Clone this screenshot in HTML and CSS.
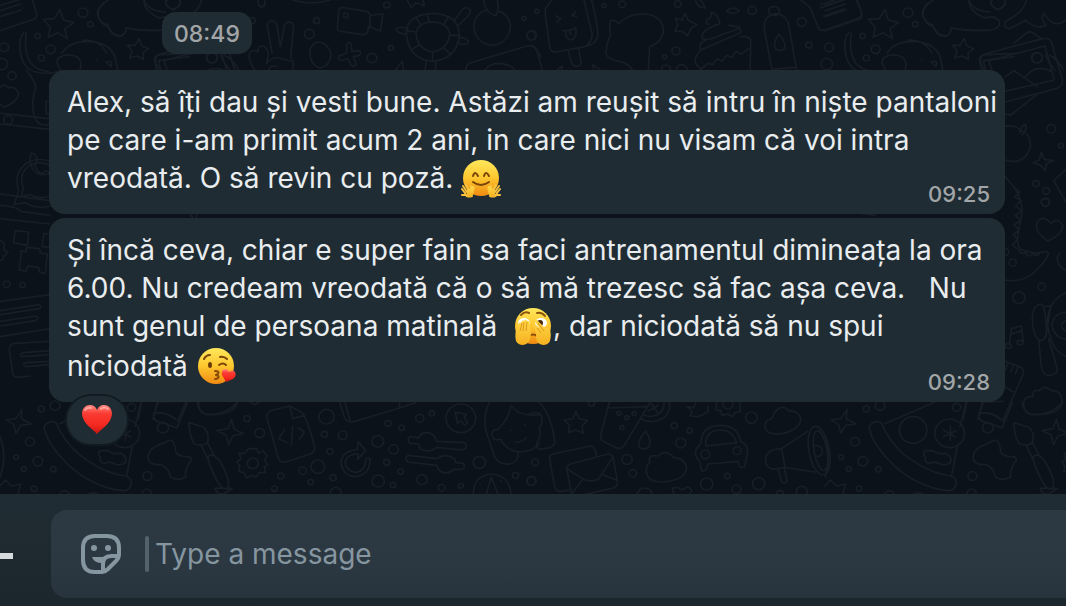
FILE: index.html
```html
<!DOCTYPE html>
<html lang="ro">
<head>
    <meta charset="UTF-8">
    <meta name="viewport" content="width=device-width, initial-scale=1.0">
    <title>Chat</title>
    <link rel="stylesheet" href="styles.css">
</head>
<body>
    <main class="chat">
        <svg class="wallpaper" aria-hidden="true">
            <defs>
                <g id="doodles">
                    <!-- top left -->
                    <g transform="scale(.3444 .3333)">
                        <path d="M0 16L72 -6M0 32L60 12M0 50L62 30M0 92L98 58Q110 52 106 38L94 0"/>
                        <path d="M174 28L184 60L214 68L188 86L196 116L168 98L140 112L146 82L126 58L158 56Z"/>
                        <path d="M404 116L412 138L432 146L416 158L416 178L398 168L376 174L384 154L370 136L392 136Z"/>
                        <path d="M300 8Q280 30 286 50Q292 70 312 74Q322 106 346 110Q364 108 366 84Q420 94 470 90M418 0Q430 34 480 36M482 0Q478 22 502 28Q524 20 524 0"/>
                        <path d="M70 98Q54 110 58 150Q64 206 104 216Q150 226 176 210Q156 180 176 170Q200 158 226 172Q240 190 232 210M76 100Q68 160 90 190Q108 212 140 214M180 160Q200 124 256 124Q316 126 334 170L342 210M240 120Q290 118 310 160M280 180l2 2M308 186Q330 178 322 200Z"/>
                        <path d="M76 210Q100 240 104 262Q88 310 100 350Q110 380 142 374M134 304h14M134 304v38h14"/>
                        <path d="M0 262Q14 248 26 264Q44 256 54 280Q54 304 12 322L0 312"/>
                        <path d="M454 210L448 178Q450 166 466 164L560 160M466 208L460 182L550 170M640 166Q650 190 668 210M652 166Q680 180 692 210"/>
                        <path d="M750 0Q748 18 760 22Q772 18 768 0M850 0Q900 18 960 0"/>
                        <path d="M776 76Q776 64 788 62Q800 62 804 76L814 140L826 76Q830 66 842 66Q854 70 852 84L844 170Q856 190 850 210M776 76L790 160M740 210Q720 180 724 160Q732 146 748 156Q750 136 764 138Q776 144 780 160L774 190M774 190Q790 170 812 174L844 184M780 210Q786 194 804 200"/>
                        <path d="M900 150Q906 128 926 126Q954 130 962 164Q956 200 930 204Q898 196 900 150Z"/>
                        <path d="M1008 130Q1016 124 1020 132L1022 154L1042 152Q1052 158 1044 166L1026 170L1034 192Q1030 202 1020 196L1010 176L990 182Q978 178 984 168L1006 160Z"/>
                        <path d="M992 22L1064 34Q1074 36 1074 46L1112 42L1104 94L1070 78L1068 92Q1066 104 1054 104L990 94Q976 92 980 78L984 30Q986 22 992 22M1074 48V76"/>
                        <path d="M1180 100Q1180 44 1256 40Q1332 42 1334 106Q1328 176 1256 184Q1186 178 1180 100ZM1208 100Q1214 66 1256 66Q1302 68 1306 104Q1300 148 1256 156Q1212 148 1208 100ZM1240 42L1246 66M1300 54L1288 74M1334 106H1306M1310 164L1290 146M1256 184V156M1196 148L1218 134M1180 92L1208 96M1210 56L1222 74M1180 104Q1148 98 1150 86Q1160 78 1184 86M1318 64L1344 26Q1362 18 1366 34Q1362 50 1332 74M1332 112Q1362 114 1360 128Q1352 138 1326 128M1238 184L1234 210M1266 184L1264 210"/>
                        <path d="M1404 0Q1410 42 1440 46Q1450 30 1444 0M1414 30Q1376 40 1376 84Q1382 130 1430 136Q1480 130 1482 74Q1476 40 1444 32M1352 210Q1354 192 1368 188L1530 138Q1552 134 1560 150L1570 170M1408 210Q1420 190 1450 190Q1480 192 1494 208M1148 210L1168 184L1172 210M1182 0L1194 24L1208 8L1232 18L1228 0"/>
                        <circle cx="241" cy="38" r="14"/><circle cx="262" cy="73" r="8"/><circle cx="12" cy="142" r="13"/><circle cx="147" cy="148" r="13"/><circle cx="109" cy="108" r="8"/><circle cx="120" cy="174" r="9"/><circle cx="5" cy="192" r="17"/><circle cx="35" cy="227" r="12"/><circle cx="24" cy="360" r="13"/><circle cx="919" cy="62" r="9"/><circle cx="898" cy="102" r="14"/><circle cx="1004" cy="46" r="7"/><circle cx="1080" cy="174" r="14"/><circle cx="1135" cy="143" r="7"/><circle cx="1123" cy="15" r="9"/><circle cx="1542" cy="107" r="13"/><circle cx="616" cy="174" r="15"/><circle cx="1522" cy="55" r="6"/><circle cx="732" cy="62" r="9"/>
                    </g>
                    <!-- top right -->
                    <g transform="translate(530 0) scale(.3418 .3333)">
                        <path d="M64 0L46 24Q42 36 46 52L58 144Q62 158 76 156L160 140Q190 136 198 110Q200 80 180 0M158 0L182 104Q180 126 164 138M76 48L90 56L78 66M134 36L122 46L136 50M96 92Q116 94 134 84Q138 116 120 120Q104 118 104 94M116 92L120 104M112 152L122 190Q130 202 144 198Q152 190 148 178L142 146M0 136Q14 138 20 154L36 210"/>
                        <path d="M236 62Q248 58 260 70Q290 40 340 42Q390 50 390 92Q388 126 350 140L346 210M236 62Q230 80 236 104Q224 130 222 160Q228 180 260 184Q288 190 300 210M78 210L94 198V210M186 210L184 194L206 210"/>
                        <path d="M454 40L462 60L488 74L472 84L460 108L446 94L424 94L432 74L426 54L446 60Z"/>
                        <path d="M524 72Q510 74 518 60Q532 54 530 38Q544 36 552 60Q560 72 548 74Q500 90 504 116Q520 124 560 104Q610 90 612 80M582 76Q622 78 616 98L500 150Q490 130 512 122M616 110Q636 106 646 120L644 210M500 150Q480 170 484 190L500 208L520 190L534 194L548 176L562 184L576 166L590 172L604 154L618 162L640 146"/>
                        <path d="M708 210L686 90Q682 54 706 44Q740 32 756 70L780 210M698 30Q700 20 714 20Q730 20 730 36L726 44Q712 50 700 40ZM728 102Q748 124 746 144Q734 158 718 146Q710 130 728 102M708 208L776 202M574 34Q596 14 612 34Q594 46 574 34M484 0Q490 24 512 24Q508 8 496 0"/>
                        <path d="M792 0L818 20L844 84Q850 94 862 90L962 54Q974 48 970 36L954 0M850 14L896 -2M850 24L918 0M860 48L920 26"/>
                        <circle cx="5" cy="106" r="14"/><circle cx="20" cy="34" r="6"/><circle cx="217" cy="17" r="6"/><circle cx="270" cy="13" r="10"/><circle cx="432" cy="12" r="10"/><circle cx="427" cy="153" r="12"/><circle cx="394" cy="170" r="6"/><circle cx="398" cy="208" r="13"/><circle cx="444" cy="210" r="16"/><circle cx="650" cy="31" r="12"/><circle cx="795" cy="66" r="13"/><circle cx="816" cy="135" r="9"/>
                    </g>
                    <!-- right edge, wraps over the seam -->
                    <g transform="translate(-295 0) scale(.3418 .3333)">
                        <path d="M1180 0Q1140 26 1150 50Q1160 74 1180 80Q1196 112 1220 106Q1234 96 1232 84Q1290 96 1350 90Q1376 84 1374 64Q1360 44 1330 54Q1284 34 1284 0M1452 0Q1448 34 1392 64Q1382 80 1400 86Q1430 74 1450 60Q1480 90 1510 76Q1490 52 1504 40Q1534 90 1568 60M1370 30Q1338 12 1352 0M1370 30Q1398 16 1388 0"/>
                        <path d="M1330 162L1500 116Q1520 112 1526 128L1558 240Q1560 258 1540 266L1390 306M1330 162Q1314 170 1320 190L1328 210M1342 182L1506 138L1534 240L1390 274M1342 182L1352 210M1416 130L1454 98Q1464 92 1476 102L1496 116M1390 230L1416 212L1484 260M1450 230Q1480 190 1524 214M1530 170L1556 200M1390 340Q1404 352 1420 334L1480 286"/>
                        <path d="M1390 380Q1420 372 1434 390Q1466 400 1464 440Q1450 488 1408 484L1390 480M1434 398Q1436 376 1450 374Q1454 394 1440 404M1496 456L1504 478L1532 482L1510 492L1508 512L1494 496L1472 488L1490 480Z"/>
                        <circle cx="1483" cy="173" r="16"/><circle cx="1525" cy="386" r="13"/><circle cx="1480" cy="551" r="9"/><circle cx="1510" cy="573" r="10"/><circle cx="1508" cy="606" r="12"/><circle cx="1553" cy="437" r="7"/>
                        <path d="M1568 508L1532 542L1568 606"/>
                    </g>
                    <g transform="translate(135 200) scale(.3333)">
                        <path d="M134 -72L164 -36Q188 0 186 40L176 90Q168 130 180 146Q200 156 232 160Q260 150 266 160Q260 180 230 210Q190 250 134 240M162 -36l18 12l-16 14l20 12l-18 16l20 14l-20 14l16 16l-20 12l14 16l-16 14l12 14l-14 16l12 12M176 150q8 16 20 8q10 18 22 4q12 12 22 -4"/>
                        <path d="M262 124L234 96Q222 70 240 58Q256 48 272 70Q294 50 308 76Q308 104 262 124Z"/>
                        <path d="M148 434L154 386L184 378L190 424M154 402L186 392M300 160Q286 170 296 192Q304 206 318 210"/><ellipse cx="145" cy="438" rx="9" ry="7"/><ellipse cx="180" cy="428" rx="9" ry="7"/>
                        <path d="M240 312Q212 320 218 370Q222 420 246 422Q264 410 258 370Q254 310 240 312M250 320L272 318L258 410M236 420L244 500Q250 528 270 526Q294 522 292 506L266 416M318 278Q268 300 262 360Q268 450 318 470M318 336Q280 340 276 376Q284 414 318 418M318 362Q300 368 306 384L318 394"/>
                        <path d="M134 484L178 500Q194 506 190 522L130 658M144 490l-8 20M160 496l-8 20M174 502l-8 20M134 560L160 576M130 604L62 606M20 606L10 658M66 610L54 658M62 640Q96 634 120 658"/>
                        <path d="M202 640Q184 620 194 600Q204 586 220 590Q216 566 238 572Q256 552 274 572Q300 572 304 592Q314 622 280 636Q240 650 202 640Z"/>
                        <circle cx="256" cy="8" r="12"/><circle cx="158" cy="188" r="11"/><circle cx="135" cy="156" r="11"/><circle cx="177" cy="293" r="18"/><circle cx="245" cy="260" r="11"/>
                    </g>
                    <!-- left edge -->
                    <g transform="translate(0 60) scale(.3333)">
                        <path d="M0 160L150 176M0 192L150 208M0 402L150 422M0 436Q56 440 62 454L150 466M0 476L150 492M42 434L56 392Q40 340 76 312Q110 290 150 304M42 434L76 428Q110 450 150 438M64 410L70 382Q54 346 84 320Q114 300 150 316M64 410L90 404Q120 420 150 408M94 280Q108 278 112 302L104 316Q112 336 126 342L138 332Q150 338 150 346M94 280Q84 300 100 330Q120 350 144 342"/>
                        <path d="M46 512L86 516L82 556L40 548ZM132 520L150 522M132 520L126 560L150 562M80 562L118 566L122 580L142 582L136 640L118 636L116 622L84 618L78 634L58 630L64 572L78 576ZM0 540L12 550V570L24 576L12 588L8 600L0 602"/>
                        <path d="M0 724L150 704M0 752L116 734Q126 736 120 746L0 764M0 784L110 768Q120 776 106 782L0 798M0 830L150 806M150 844L44 850Q28 852 28 870L38 940Q42 954 56 952L90 948M150 872L70 878Q56 882 66 890L150 884M150 904L76 908Q66 914 76 920L150 914"/>
                        <circle cx="20" cy="673" r="10"/><circle cx="68" cy="675" r="8"/>
                    </g>
                    <!-- bottom left -->
                    <g transform="translate(0 380) scale(.3444 .3333)">
                        <path d="M64 88L62 116L90 132L60 136L46 160L40 134L18 120L46 116Z"/>
                        <path d="M128 140Q140 120 162 126Q182 180 230 224Q300 280 364 288Q386 294 380 316Q374 334 356 332Q270 322 200 256Q134 190 128 140ZM172 132L320 66M410 66L392 140M384 200L368 286"/>
                        <circle cx="256" cy="150" r="40"/><circle cx="362" cy="160" r="43"/><path d="M364 138V182M344 150L380 172M344 170L380 152M290 212L316 212Q326 224 350 220Q370 230 364 248Q350 258 334 252Q318 242 306 250Q286 248 292 232Q282 222 290 212"/>
                        <path d="M460 66L446 104Q446 120 458 124L514 144L544 68M450 100Q490 94 520 126"/><circle cx="473" cy="143" r="16"/>
                        <path d="M494 180Q508 180 510 216Q520 232 550 230Q562 240 548 250Q534 280 540 290Q512 306 494 290Q490 262 468 254Q430 256 430 230Q432 206 460 196Z"/>
                        <path d="M548 128L592 142Q610 160 602 188Q588 200 566 192Q552 180 548 128ZM584 196L604 238M602 188L622 226M604 230Q620 216 640 246Q670 300 662 324Q646 334 632 306Q604 250 604 230ZM624 324L674 326L650 342L632 340Z"/>
                        <path d="M672 118L680 148L706 160L676 168L664 194L656 164L630 152L662 146Z"/>
                        <path d="M574 66Q572 92 600 104Q656 106 690 66M724 66L740 74L754 66M986 66L1000 112Q1010 130 1030 124L1160 84V66M1002 66L1016 120M1160 84L1206 68"/>
                        <path d="M786 92L842 78L880 100Q900 140 914 204Q914 216 900 222L830 246Q814 250 808 234L776 118Q772 98 786 92ZM842 80L850 116L884 106M826 148L810 176L834 188M850 138L846 194M866 144L884 156L868 180"/>
                        <path d="M722 206L746 206L750 220L764 212L776 228L768 240L778 254L768 260L770 278L752 278L744 292L730 286L716 294L708 278L694 274L696 258L688 246L700 236L694 220L710 220Z"/><circle cx="734" cy="250" r="16"/>
                        <path d="M1038 208Q990 214 990 250Q998 290 1034 290Q1076 284 1074 236Q1068 228 1062 238Q1062 272 1034 278Q1004 272 1002 246Q1006 222 1040 222L1038 238L1062 212L1040 184Z"/>
                        <path d="M1190 170L1216 174Q1222 156 1244 158Q1264 164 1268 184L1348 188Q1362 200 1344 210L1266 202Q1248 220 1222 208L1214 192L1190 190Q1180 178 1190 170ZM1184 226L1270 236Q1290 218 1320 236L1324 248L1344 250Q1354 262 1342 268L1318 268Q1296 290 1272 268L1268 256L1184 246Q1174 234 1184 226Z"/>
                        <circle cx="1338" cy="115" r="43"/><path d="M1322 96L1354 104L1348 112L1358 128L1348 136L1338 122L1328 130Z"/>
                        <path d="M1422 66Q1400 110 1412 156L1436 230Q1450 256 1480 252Q1508 244 1504 218M1444 150Q1424 148 1430 170Q1436 184 1454 178Q1470 212 1510 216Q1550 214 1568 190M1444 150Q1476 120 1484 76Q1506 112 1568 104M1482 150l1 1M1524 134l1 1M1496 186Q1518 188 1528 172"/>
                        <path d="M1374 342Q1376 284 1430 282Q1480 288 1484 342M1412 342L1426 292L1446 342M1394 312l1 1M1454 302l1 1M0 170Q22 230 0 290M0 318L16 300L34 318L60 312L52 342M258 342L272 338L284 342"/>
                        <circle cx="120" cy="87" r="9"/><circle cx="160" cy="77" r="14"/><circle cx="382" cy="82" r="12"/><circle cx="717" cy="116" r="9"/><circle cx="754" cy="159" r="14"/><circle cx="948" cy="110" r="22"/><circle cx="942" cy="163" r="9"/><circle cx="995" cy="166" r="13"/><circle cx="1127" cy="130" r="9"/><circle cx="1166" cy="143" r="8"/><circle cx="1219" cy="115" r="12"/><circle cx="1254" cy="100" r="8"/><circle cx="1097" cy="184" r="17"/><circle cx="1143" cy="208" r="14"/><circle cx="87" cy="185" r="13"/><circle cx="47" cy="232" r="7"/><circle cx="110" cy="244" r="14"/><circle cx="69" cy="267" r="7"/><circle cx="155" cy="268" r="8"/><circle cx="99" cy="326" r="8"/><circle cx="188" cy="346" r="14"/><circle cx="428" cy="288" r="13"/><circle cx="426" cy="340" r="13"/><circle cx="958" cy="214" r="9"/><circle cx="923" cy="260" r="20"/><circle cx="879" cy="272" r="11"/><circle cx="902" cy="306" r="8"/><circle cx="967" cy="293" r="9"/><circle cx="815" cy="288" r="9"/><circle cx="797" cy="326" r="8"/><circle cx="1123" cy="247" r="9"/><circle cx="1163" cy="275" r="8"/><circle cx="1098" cy="303" r="18"/><circle cx="1141" cy="315" r="8"/><circle cx="1225" cy="299" r="15"/><circle cx="1282" cy="323" r="10"/><circle cx="1338" cy="317" r="7"/><circle cx="1392" cy="247" r="18"/><circle cx="1497" cy="286" r="9"/><circle cx="1542" cy="303" r="13"/><circle cx="975" cy="338" r="16"/>
                    </g>
                    <!-- bottom right -->
                    <g transform="translate(530 380) scale(.3418 .3333)">
                        <path d="M26 66Q60 100 72 180Q74 196 60 202L32 208Q14 206 20 190Q34 170 28 144Q42 120 30 102Q16 94 0 100"/>
                        <path d="M134 94L144 116L168 122L152 138L156 160L134 150L112 158L116 136L100 120L126 116Z"/>
                        <path d="M232 66L206 168Q206 182 218 186L254 204Q268 208 276 196L352 66M228 84L340 80M324 116Q360 136 396 110Q412 90 408 66M330 104Q360 116 382 98Q394 84 392 66M356 72L374 98M346 94L376 76"/><circle cx="260" cy="100" r="6"/><circle cx="283" cy="113" r="6"/><circle cx="305" cy="100" r="6"/><circle cx="269" cy="143" r="6"/>
                        <path d="M338 154Q356 180 350 196Q336 216 320 202Q312 184 338 154Z"/>
                        <path d="M68 222L176 198Q188 198 190 210L196 230M68 222Q54 226 58 240L72 320Q78 336 92 334L116 330M118 252L228 222Q240 222 244 236L256 308Q256 320 244 324L160 344M118 252Q104 258 108 272L122 342M110 268L160 300Q184 306 200 298L242 232M122 342L154 298M214 284L252 300"/>
                        <path d="M348 294Q330 270 350 246Q344 222 374 228Q396 206 420 232Q456 236 458 264Q456 300 390 306Q358 306 348 294Z"/>
                        <path d="M500 190Q500 138 556 136Q608 136 616 184Q640 196 636 220L628 260Q612 268 608 244L520 252Q518 276 502 272L496 244Q480 230 486 208ZM514 198Q512 152 556 150Q594 150 604 188Z"/><circle cx="513" cy="223" r="13"/><circle cx="606" cy="212" r="12"/>
                        <path d="M464 80L478 84L486 66M520 80L522 94L506 104L490 110L470 108L474 94L460 80M546 68L544 90L558 92L562 106L578 102L592 110L600 98L616 94L614 66"/><circle cx="579" cy="72" r="15"/>
                        <path d="M694 154Q680 138 694 120Q710 120 714 100Q736 68 756 92Q786 92 792 114Q794 142 750 158Q714 168 694 154Z"/>
                        <path d="M812 154L736 206Q700 206 690 228Q684 262 712 268L744 262L834 276M736 206L746 262M726 268L736 304Q742 314 752 304L744 264"/><ellipse cx="846" cy="212" rx="30" ry="74" transform="rotate(-10 846 212)"/><ellipse cx="850" cy="212" rx="19" ry="60" transform="rotate(-10 850 212)"/><path d="M834 196Q854 196 856 214Q852 232 838 228"/>
                        <path d="M416 324L432 322L444 330L462 320L474 332L466 344M416 324L422 344"/>
                        <circle cx="15" cy="247" r="10"/><circle cx="5" cy="302" r="13"/><circle cx="422" cy="137" r="9"/><circle cx="467" cy="152" r="8"/><circle cx="441" cy="189" r="15"/><circle cx="284" cy="238" r="15"/><circle cx="301" cy="280" r="11"/><circle cx="577" cy="288" r="8"/><circle cx="517" cy="312" r="18"/><circle cx="648" cy="113" r="17"/><circle cx="604" cy="328" r="13"/><circle cx="669" cy="311" r="18"/><circle cx="795" cy="335" r="16"/><circle cx="732" cy="340" r="9"/><circle cx="336" cy="346" r="22"/><circle cx="180" cy="70" r="9"/>
                    </g>
                </g>
            </defs>
            <use href="#doodles"/>
            <use href="#doodles" x="825"/>
            <use href="#doodles" x="1650"/>
        </svg>

        <svg class="defs" aria-hidden="true">
            <defs>
                <linearGradient id="face" x1="0" y1="0" x2="0" y2="1">
                    <stop offset="0" stop-color="#ffe85c"/>
                    <stop offset=".5" stop-color="#fdc72f"/>
                    <stop offset="1" stop-color="#f08a12"/>
                </linearGradient>
                <linearGradient id="hand" x1="0" y1="0" x2="0" y2="1">
                    <stop offset="0" stop-color="#ffd94a"/>
                    <stop offset="1" stop-color="#f5b01f"/>
                </linearGradient>
                <linearGradient id="red" x1="0" y1="0" x2="0" y2="1">
                    <stop offset="0" stop-color="#ff8a80"/>
                    <stop offset=".3" stop-color="#fb3b33"/>
                    <stop offset=".7" stop-color="#f3281f"/>
                    <stop offset="1" stop-color="#c51610"/>
                </linearGradient>
            </defs>
        </svg>

        <time class="time-pill">08:49</time>

        <article class="bubble">
            <p>Alex, să îți dau și vesti bune. Astăzi am reușit să intru în niște pantaloni<br>
            pe care i-am primit acum 2 ani, in care nici nu visam că voi intra<br>
            vreodată. O să revin cu poză.
            <svg class="emoji" viewBox="0 0 40 40" role="img" aria-label="hugging face">
                <circle cx="20" cy="19" r="18" fill="url(#face)"/>
                <path d="M12 17q2-6 5 0M23 17q2-6 5 0" fill="none" stroke="#7a4508" stroke-width="2" stroke-linecap="round"/>
                <path d="M12 23q8 6 16 0" fill="none" stroke="#7a4508" stroke-width="2" stroke-linecap="round"/>
                <path d="M11 37q-6 2-7-3L1 30M6 33L2 27M8 32L5 26M10 32L10 27M1 36L6 36" fill="none" stroke="#fbc23c" stroke-width="2" stroke-linecap="round"/>
                <path d="M5 32q4-2 6-5q4 0 2 5q0 6-6 6z" fill="url(#hand)"/>
                <path d="M29 37q6 2 7-3L39 30M34 33L38 27M32 32L35 26M30 32L30 27M39 36L34 36" fill="none" stroke="#fbc23c" stroke-width="2" stroke-linecap="round"/>
                <path d="M35 32q-4-2-6-5q-4 0-2 5q0 6 6 6z" fill="url(#hand)"/>
            </svg></p>
            <time class="sent">09:25</time>
        </article>

        <article class="bubble">
            <p>Și încă ceva, chiar e super fain sa faci antrenamentul dimineața la ora<br>
            6.00. Nu credeam vreodată că o să mă trezesc să fac așa ceva.&nbsp;&nbsp; Nu<br>
            sunt genul de persoana matinală&nbsp;
            <svg class="emoji" viewBox="0 0 40 40" role="img" aria-label="face with peeking eye">
                <circle cx="20" cy="19" r="18" fill="url(#face)"/>
                <path d="M8 8q4-4 8-2M24 6q5-1 8 3" fill="none" stroke="#8a5410" stroke-width="2" stroke-linecap="round"/>
                <ellipse cx="11" cy="16" rx="6" ry="5" fill="#fff"/>
                <ellipse cx="28" cy="16" rx="6" ry="5" fill="#fff"/>
                <circle cx="27" cy="16" r="3" fill="#4a2a0a"/>
                <path d="M16 29q4-3 8 0" fill="none" stroke="#8a4b08" stroke-width="2"/>
                <path d="M3 34Q1 26 5 18Q6 14 8 16Q9 12 11 14Q13 11 14 14Q17 13 17 19L18 26Q18 37 10 38Q5 38 3 34Z" fill="url(#hand)"/>
                <path d="M7 24L9 16M10 24L11 15M13 24L14 15" fill="none" stroke="#e0951a"/>
                <path d="M37 34Q39 26 36 21Q34 19 33 22L24 13Q21 12 22 15L28 23L22 17Q20 18 21 20L23 26Q22 37 30 38Q35 38 37 34Z" fill="url(#hand)"/>
                <path d="M24 21L28 26M25 16L31 24" fill="none" stroke="#e0951a"/>
            </svg>, dar niciodată să nu spui<br>
            niciodată
            <svg class="emoji" viewBox="0 0 40 40" role="img" aria-label="face blowing a kiss">
                <circle cx="20" cy="19" r="18" fill="url(#face)"/>
                <path d="M8 12q2-4 6-4M24 10q4-1 7 2M23 18q4-3 7 0" fill="none" stroke="#7a4508" stroke-width="2" stroke-linecap="round"/>
                <ellipse cx="14" cy="18" rx="2" ry="3" fill="#6b3c08"/>
                <path d="M19 24q5 0 3 3l-2 1q4 1 2 3q-1 1-3 1" fill="none" stroke="#8a4b08" stroke-width="2" stroke-linecap="round" stroke-linejoin="round"/>
                <path d="M30 35L26 28q-1-5 3-6q3 0 4 3q3-3 6 0q2 4-2 7z" fill="url(#red)"/>
            </svg></p>
            <time class="sent">09:28</time>
            <button type="button" class="reaction" aria-label="1 reaction">
                <svg viewBox="0 0 30 30">
                    <path d="M15 29C11 24 1 19 0 9C0 3 4 0 8 0Q13 0 15 5Q17 0 22 0C26 0 30 3 30 9C29 19 19 24 15 29Z" fill="url(#red)"/>
                    <path d="M3 5q2-3 6-2M19 4q3-3 7 0" fill="none" stroke="#ffc9c4" stroke-width="2" stroke-linecap="round" opacity=".6"/>
                </svg>
            </button>
        </article>
    </main>

    <form class="composer">
        <button type="button" class="attach" aria-label="Attach">
            <svg viewBox="0 0 13 40"><path d="M0 22H13" stroke="#d5dadc" stroke-width="6"/></svg>
        </button>
        <div class="field">
            <button type="button" class="sticker" aria-label="Stickers">
                <svg viewBox="0 0 40 40">
                    <path d="M2 14Q2 2 14 2H26Q38 2 38 14V21Q38 24 35 27L27 35Q24 38 21 38H14Q2 38 2 26Z" fill="none" stroke="#8696a0" stroke-width="4"/>
                    <path d="M22 38V30Q22 22 30 22H38" fill="none" stroke="#8696a0" stroke-width="4"/>
                    <circle cx="13" cy="14" r="3" fill="#8696a0"/>
                    <circle cx="27" cy="14" r="3" fill="#8696a0"/>
                    <path d="M11 23H26L21 29Q13 29 11 23Z" fill="#8696a0"/>
                </svg>
            </button>
            <span class="caret"></span>
            <input type="text" class="message-input" placeholder="Type a message" aria-label="Type a message">
        </div>
    </form>
</body>
</html>
```
FILE: styles.css
```css
* { box-sizing: border-box; }
body {
    margin: 0;
    min-height: 100vh;
    display: flex;
    flex-direction: column;
    background: #0b1219;
    color: #e9edef;
    font-family: Inter, "Noto Sans", sans-serif;
    overflow-x: hidden;
}
button { padding: 0; border: none; background: none; cursor: pointer; }
button svg { display: block; }

.chat {
    position: relative;
    flex: 1;
    display: flex;
    flex-direction: column;
    gap: 4px;
    padding: 12px 61px 92px 49px;
    overflow: hidden;
}
.wallpaper {
    position: absolute;
    inset: 0;
    width: 100%;
    height: 100%;
    fill: none;
    stroke: #171e25;
    stroke-width: 5;
    stroke-linecap: round;
    stroke-linejoin: round;
}
.defs { position: absolute; width: 0; height: 0; }

.time-pill {
    position: relative;
    align-self: flex-start;
    margin: 0 0 12px 113px;
    padding: 2px 12px 0;
    border-radius: 14px;
    background: #202c33;
    color: #a2a6a8;
    font-size: 23px;
    font-weight: 500;
    line-height: 40px;
}

.bubble {
    position: relative;
    padding: 13px 18px 15px;
    border-radius: 16px;
    background: #202c33;
}
.bubble p {
    margin: 0;
    font-size: 28px;
    line-height: 38px;
    white-space: nowrap;
}
.emoji {
    width: 40px;
    height: 40px;
    vertical-align: -11px;
}
.sent {
    position: absolute;
    right: 15px;
    bottom: 6px;
    color: #a2a6a8;
    font-size: 22px;
    font-weight: 500;
    line-height: 28px;
}
.reaction {
    position: absolute;
    left: 16px;
    bottom: -44px;
    padding: 9px 15px;
    border: 2px solid #111b21;
    border-radius: 26px;
    background: #202c33;
}
.reaction svg { width: 30px; height: 30px; }

.composer {
    display: flex;
    align-items: center;
    gap: 38px;
    padding: 16px 0 8px;
    background: linear-gradient(#202c33, #1c272d);
}
.attach svg { width: 13px; height: 40px; }
.field {
    flex: 1;
    display: flex;
    align-items: center;
    height: 88px;
    padding-left: 30px;
    border-radius: 16px 0 0 16px;
    background: linear-gradient(#2c3942, #2b3841 60%, #27343d);
}
.sticker svg { width: 40px; height: 40px; }
.caret {
    width: 4px;
    height: 36px;
    margin: 0 6px 0 24px;
    border-radius: 2px;
    background: #53626b;
}
.message-input {
    flex: 1;
    padding: 0;
    border: none;
    outline: none;
    background: none;
    color: #e9edef;
    font-family: inherit;
    font-size: 28px;
}
.message-input::placeholder { color: #8696a0; opacity: 1; }
```
